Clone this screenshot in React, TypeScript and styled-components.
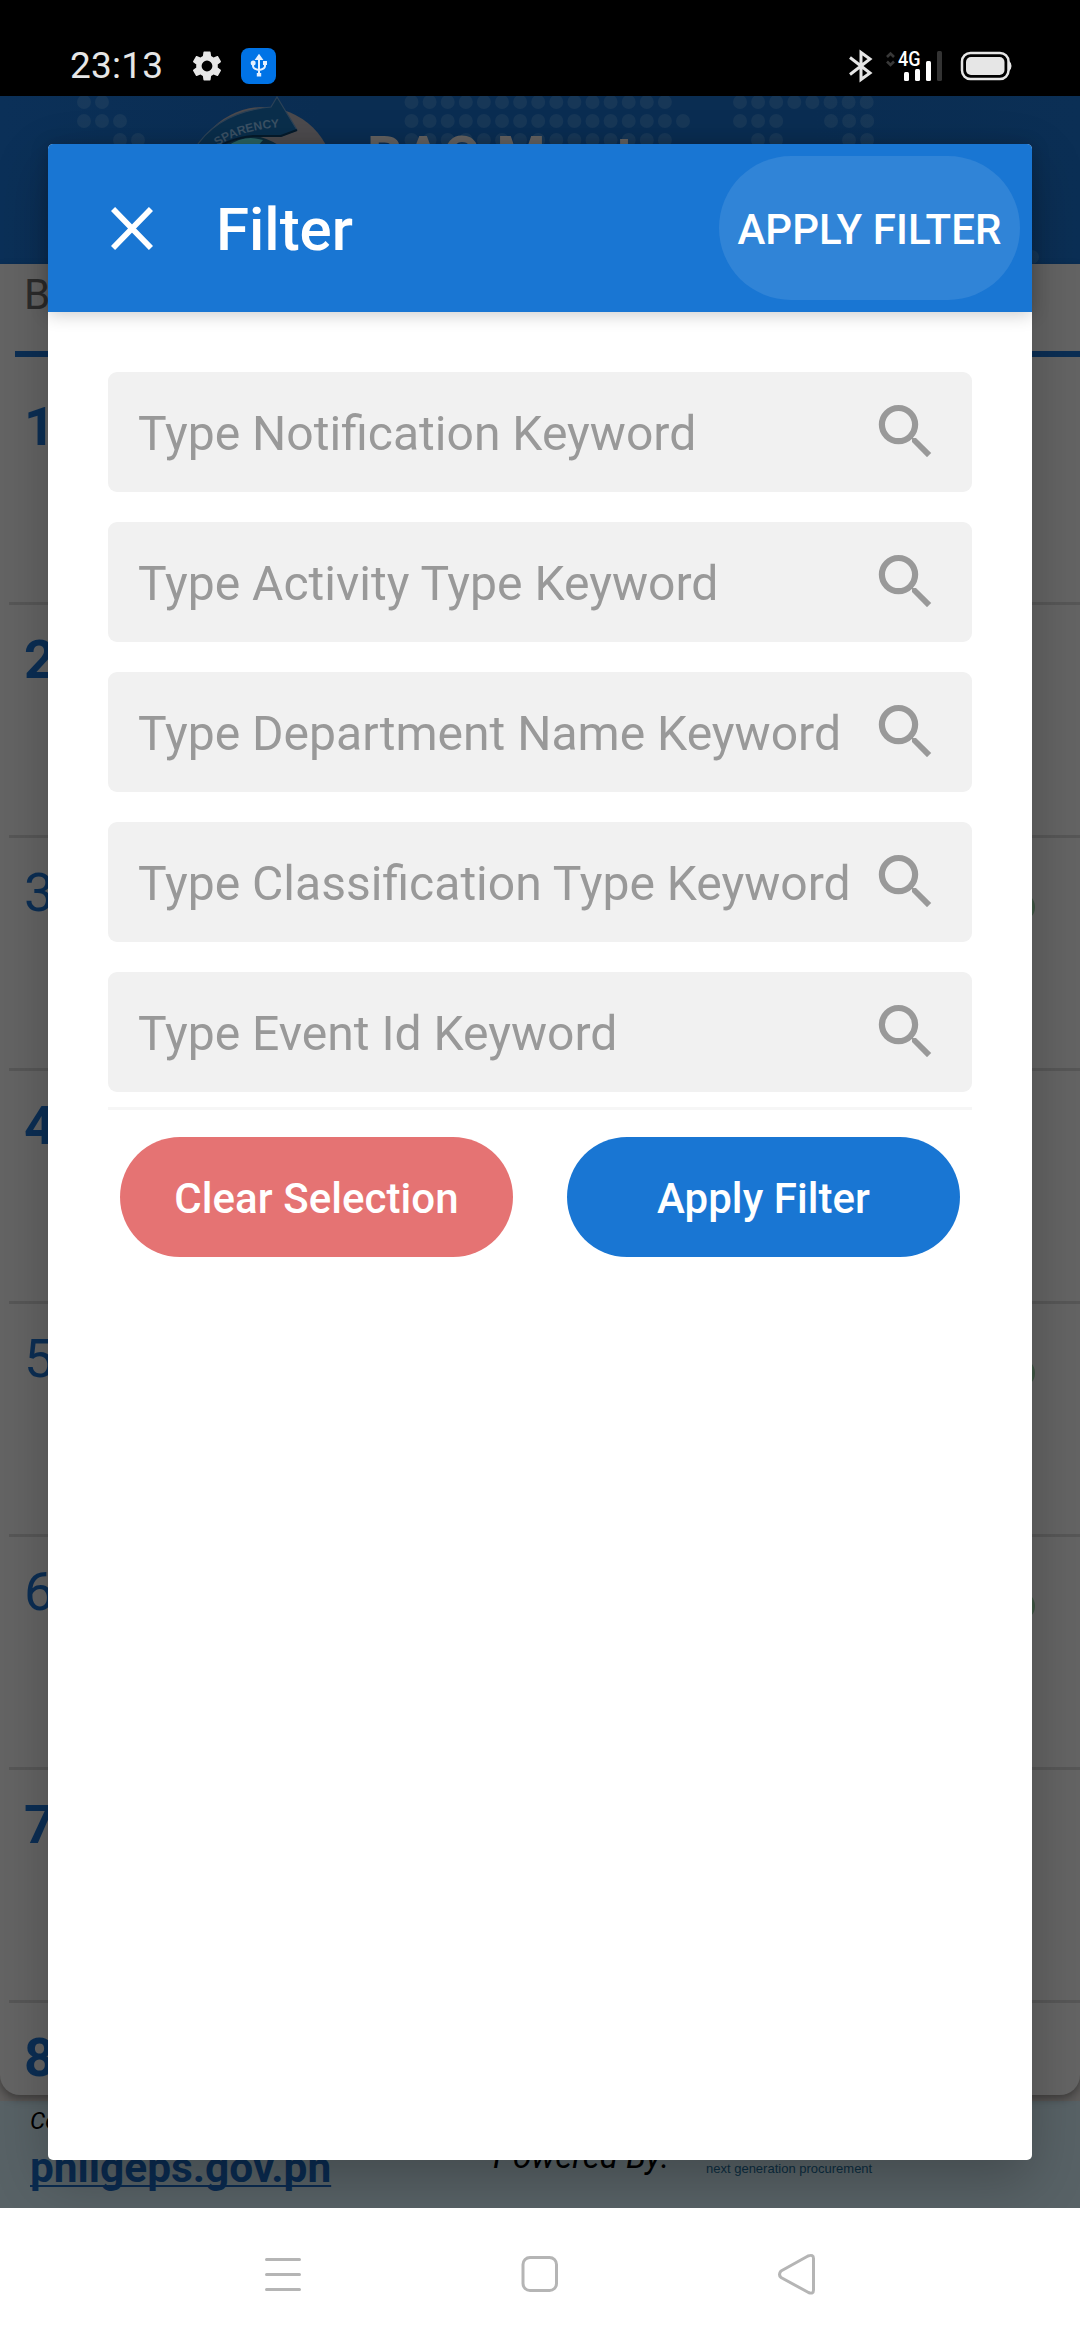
import React from "react";
import styled, { createGlobalStyle } from "styled-components";

const Global = createGlobalStyle`
  * { box-sizing: border-box; }
  body { margin: 0; background: #fff; font-family: Roboto, "Liberation Sans", sans-serif; }
  button { font-family: inherit; border: 0; padding: 0; }
`;
const Screen = styled.div`
  width: 1080px; height: 2340px; display: flex; flex-direction: column; overflow: hidden;
  position: relative; background: #fff;
`;
const StatusBar = styled.header`
  height: 96px; flex: none; background: #000; color: #e6e6e6; display: flex;
  justify-content: space-between; padding: 36px 67px 0 70px;
`;
const StatusGroup = styled.div`display: flex; align-items: center; height: 60px;`;
const Clock = styled.span`
  font-size: 37px; line-height: 60px; letter-spacing: 0.2px; width: 119px; white-space: nowrap;
`;
const GearSvg = styled.svg`flex: none;`;
const Usb = styled.span`
  width: 35px; height: 36px; border-radius: 8px; background: #0073e6; margin-left: 16px; display: flex;
  align-items: center; justify-content: center;
`;
const Page = styled.main`height: 2112px; flex: none; display: flex; flex-direction: column; background: #5f5d5c;`;
const Banner = styled.div`height: 168px; flex: none; background: linear-gradient(90deg, #0b3058, #0a2d52 30%, #0a2d52 75%, #0b2f55);`;
const List = styled.section`
  height: 1831px; flex: none; background: #646464; border-radius: 0 0 20px 20px; overflow: hidden;
  box-shadow: 0 4px 8px rgba(0,0,0,.35); z-index: 0;
`;
const SearchLine = styled.div`
  height: 93px; margin-left: 15px; padding-left: 9px; border-bottom: 6px solid #0b2e54;
  font-size: 42px; line-height: 61px; color: #2c2c2c;
`;
const Row = styled.div<{ $bold?: boolean; $first?: boolean }>`
  height: ${p => (p.$first ? 248 : 233)}px; margin-left: 9px; padding: ${p => (p.$first ? 39 : 24)}px 45px 0 15px;
  border-bottom: 3px solid #575757; color: #0b2e54; font-size: 54px; line-height: 62px;
  font-weight: ${p => (p.$bold ? 700 : 400)}; display: flex; justify-content: space-between;
`;
const UnreadDot = styled.span`
  width: 30px; height: 30px; border-radius: 50%; background: #3f5543; margin-top: 30px;
`;
const Footer = styled.footer`
  flex: 1; margin-top: 6px; background: #586266; display: flex;
  padding: 5px 0 0 30px; color: #000; font-style: italic;
`;
const FooterCol = styled.div`display: flex; flex-direction: column; width: 463px;`;
const Contact = styled.span`font-size: 24px; line-height: 30px;`;
const Link = styled.a`
  font-size: 42.4px; line-height: 46px; margin-top: 9px; font-weight: 700; font-style: normal; color: #0a2b50;
  text-decoration: underline; text-decoration-skip-ink: none; text-decoration-thickness: 2px; text-underline-offset: 3px;
  align-self: flex-start;
`;
const Powered = styled.span`font-size: 33px; line-height: 36px; margin-top: 33px; width: 213px; white-space: nowrap;`;
const Tagline = styled.span`
  font-family: "Liberation Sans", Arial, sans-serif; font-style: normal; font-size: 13px; line-height: 16px;
  color: #0c2d40; margin-top: 55px; white-space: nowrap;
`;
const Dialog = styled.section`
  position: absolute; left: 48px; top: 144px; width: 984px; height: 2016px; background: #fff;
  border-radius: 5px; box-shadow: 0 20px 54px rgba(0,0,0,.24); display: flex; flex-direction: column; z-index: 1;
`;
const DialogBar = styled.div`
  height: 168px; flex: none; background: #1976d3; color: #fff; border-radius: 5px 5px 0 0; display: flex;
  align-items: center; padding: 0 12px 0 63px; box-shadow: 0 2px 18px rgba(0,0,0,.22);
`;
const Title = styled.h1`font-size: 60px; line-height: 72px; font-weight: 500; margin: 4px auto 0 63px;`;
const BarAction = styled.button`
  width: 301px; height: 144px; border-radius: 72px; background: rgba(255,255,255,.1); color: #fff;
  font-size: 42px; font-weight: 500; white-space: nowrap; padding-top: 2px; letter-spacing: 0.06px;
`;
const Form = styled.div`padding: 60px 60px 0; display: flex; flex-direction: column; gap: 30px;`;
const Field = styled.label`
  height: 120px; border-radius: 9px; background: #f1f1f1; color: #999; display: flex; align-items: center;
  justify-content: space-between; padding: 0 39px 0 30px; font-size: 48.05px; white-space: nowrap;
`;
const FieldText = styled.span`padding-top: 3px; width: 0;`;
const SearchSvg = styled.svg`margin-top: -4px; flex: none;`;
const Actions = styled.div`
  margin: 15px 60px 0; border-top: 3px solid #f6f6f6; padding: 27px 12px 0; display: flex; justify-content: space-between;
`;
const Pill = styled.button<{ $color: string }>`
  width: 393px; height: 120px; border-radius: 60px; background: ${p => p.$color}; color: #fff;
  font-size: 42px; font-weight: 500; padding-top: 2px; letter-spacing: 0.06px;
`;
const NavBar = styled.nav`
  height: 132px; flex: none; background: #fff; display: flex; justify-content: center; align-items: center; gap: 217px;
  position: relative; z-index: 2;
`;

const range = (start: number, n: number) => Array.from({ length: n }, (_, i) => start + i * 18.1);
const dots: [number, number[]][] = [
  [102, [84, 102, ...range(411.5, 15), ...range(740, 8)]],
  [121, [84, 102, 120, ...range(411.5, 16), ...range(740, 3), ...range(831, 3)]],
  [140, [120, 138, ...range(411.5, 15), ...range(758, 2), ...range(849, 2)]],
];

const BannerArt = () => (
  <svg width="1080" height="168" viewBox="0 96 1080 168" display="block">
    <g fill="#66757a" opacity=".14">
      {dots.map(([y, xs]) => xs.map(x => <circle key={`${x}-${y}`} cx={x} cy={y} r="7" />))}
      <circle cx="1032" cy="257" r="7" />
    </g>
    <circle cx="263" cy="178" r="71" fill="#4c4a4d" />
    <path d="M207 155Q240 121 280 146V160H205Z" fill="#0d2b3b" />
    <path d="M228 146Q244 134 263 140L258 146Z" fill="#2a6362" />
    <path d="M194 150Q217 112 271 107L277 97L297 130L282 136L253 136Q227 138 207 155Z" fill="#0a2e4b" stroke="#2c4257" strokeWidth="1.2" />
    <path d="M297 130L281 136L253 136Q227 138 207 155" fill="none" stroke="#061a2b" strokeWidth="2" />
    <path id="ribbonPath" d="M206 156Q234 127 292 127" fill="none" />
    <text fontSize="12" fontWeight="700" fill="#3b5164" fontFamily="Liberation Sans, sans-serif"><textPath href="#ribbonPath" startOffset="15">SPARENCY</textPath></text>
    <text x="367" y="176" fontSize="56" fontWeight="700" fill="#646261" letterSpacing="1.5" fontFamily="Roboto, sans-serif">BAC Men<tspan dx="4">tor</tspan></text>
  </svg>
);
const Gear = () => (
  <GearSvg width="36" height="36" viewBox="0 0 24 24" fill="#e6e6e6">
    <path d="M19.14 12.94c.04-.3.06-.61.06-.94 0-.32-.02-.64-.07-.94l2.03-1.58c.18-.14.23-.41.12-.61l-1.92-3.32c-.12-.22-.37-.29-.59-.22l-2.39.96c-.5-.38-1.03-.7-1.62-.94l-.36-2.54c-.04-.24-.24-.41-.48-.41h-3.84c-.24 0-.43.17-.47.41l-.36 2.54c-.59.24-1.13.57-1.62.94l-2.39-.96c-.22-.08-.47 0-.59.22L2.74 8.87c-.12.21-.08.47.12.61l2.03 1.58c-.05.3-.09.63-.09.94s.02.64.07.94l-2.03 1.58c-.18.14-.23.41-.12.61l1.92 3.32c.12.22.37.29.59.22l2.39-.96c.5.38 1.03.7 1.62.94l.36 2.54c.05.24.24.41.48.41h3.84c.24 0 .44-.17.47-.41l.36-2.54c.59-.24 1.13-.56 1.62-.94l2.39.96c.22.08.47 0 .59-.22l1.92-3.32c.12-.22.07-.47-.12-.61l-2.01-1.58zM12 15.6A3.6 3.6 0 1 1 12 8.4a3.6 3.6 0 0 1 0 7.2z" />
  </GearSvg>
);
const UsbIcon = () => (
  <svg width="18" height="24" viewBox="0 0 18 24" fill="none" stroke="#e4f0ff" strokeWidth="2">
    <path d="M9 4V20M3 9V12Q3 15 9 16Q15 15 15 12V9" />
    <path d="M6.5 5L9 1.5L11.5 5ZM7.8 20H10.2V21.5H7.8Z" fill="#e4f0ff" />
    <circle cx="3.2" cy="9" r="1.5" fill="#e4f0ff" /><path d="M14 8H16V10H14Z" fill="#e4f0ff" />
  </svg>
);
const StatusIcons = () => (
  <svg width="166" height="36" viewBox="847 48 166 36">
    <path d="M850 57.500L870 73L861 79.500V52.500L870 59L850 74.500" fill="none" stroke="#e6e6e6" strokeWidth="3" />
    <path d="M887 57L890.5 53.5L894 57M887 61.5L890.5 65L894 61.5" fill="none" stroke="#383838" strokeWidth="2.6" />
    <text x="898" y="65.5" fontSize="20.5" fontWeight="500" fill="#fff" fontFamily="Roboto, sans-serif" textLength="22.5" lengthAdjust="spacingAndGlyphs">4G</text>
    <g fill="#fff"><rect x="904" y="72" width="5" height="9" rx="1.5" /><rect x="915" y="69" width="5" height="12" rx="1.5" /><rect x="926" y="61" width="5" height="20" rx="1.5" /></g>
    <rect x="937" y="51" width="5" height="30" rx="1.5" fill="#333" />
    <rect x="962" y="53" width="46.5" height="26" rx="8.5" fill="none" stroke="#e6e6e6" strokeWidth="2.5" />
    <rect x="966" y="57" width="38.5" height="18" rx="5" fill="#e6e6e6" />
    <path d="M1009 61Q1011.5 62.5 1011.5 66T1009 71Z" fill="#e6e6e6" />
  </svg>
);
const CloseIcon = () => (
  <svg width="42" height="43" viewBox="0 0 42 43"><path d="M2 2L40 41M40 2L2 41" stroke="#fff" strokeWidth="5.8" /></svg>
);
const SearchIcon = () => (
  <SearchSvg width="56" height="54" viewBox="877 403 56 54" fill="none" stroke="#999">
    <circle cx="898.5" cy="424.6" r="16.6" strokeWidth="6.2" />
    <path d="M912 438H916L931.200 453L927 457.200L912 442Z" fill="#999" stroke="none" />
  </SearchSvg>
);

type Item = { id: string; bold?: boolean; unread?: boolean };
const rows: Item[] = [
  { id: "1", bold: true }, { id: "2", bold: true }, { id: "3", unread: true }, { id: "4", bold: true },
  { id: "5", unread: true }, { id: "6", unread: true }, { id: "7", bold: true }, { id: "8", bold: true },
];
const fields = ["Notification", "Activity Type", "Department Name", "Classification Type", "Event Id"];

export default function App() {
  return (
    <Screen>
      <Global />
      <StatusBar>
        <StatusGroup><Clock>23:13</Clock><Gear /><Usb><UsbIcon /></Usb></StatusGroup>
        <StatusGroup><StatusIcons /></StatusGroup>
      </StatusBar>
      <Page>
        <Banner><BannerArt /></Banner>
        <List>
          <SearchLine>B</SearchLine>
          {rows.map((r, i) => <Row key={r.id} $bold={r.bold} $first={i === 0}>{r.id}{r.unread && <UnreadDot />}</Row>)}
        </List>
        <Footer>
          <FooterCol><Contact>Contact</Contact><Link>philgeps.gov.ph</Link></FooterCol>
          <Powered>Powered By:</Powered>
          <Tagline>next generation procurement</Tagline>
        </Footer>
      </Page>
      <Dialog>
        <DialogBar><CloseIcon /><Title>Filter</Title><BarAction>APPLY FILTER</BarAction></DialogBar>
        <Form>
          {fields.map(f => <Field key={f}><FieldText>Type {f} Keyword</FieldText><SearchIcon /></Field>)}
        </Form>
        <Actions><Pill $color="#e57373">Clear Selection</Pill><Pill $color="#1976d3">Apply Filter</Pill></Actions>
      </Dialog>
      <NavBar>
        <svg width="40" height="44" viewBox="0 0 40 44" stroke="#b5b5b5" strokeWidth="3" strokeLinecap="round"><path d="M3.500 7.500H36.500M3.500 22.500H36.500M3.500 37.500H36.500" /></svg>
        <svg width="40" height="44" viewBox="0 0 40 44" fill="none" stroke="#b5b5b5" strokeWidth="3"><rect x="3" y="5.5" width="33.500" height="33" rx="7" /></svg>
        <svg width="40" height="44" viewBox="0 0 40 44" fill="none" stroke="#b5b5b5" strokeWidth="3" strokeLinejoin="round"><path d="M4 19L31 4Q36.500 2 36.500 6.500V38Q36.500 42.500 31.500 40.500L4 25.500Q1 22.500 4 19Z" /></svg>
      </NavBar>
    </Screen>
  );
}
